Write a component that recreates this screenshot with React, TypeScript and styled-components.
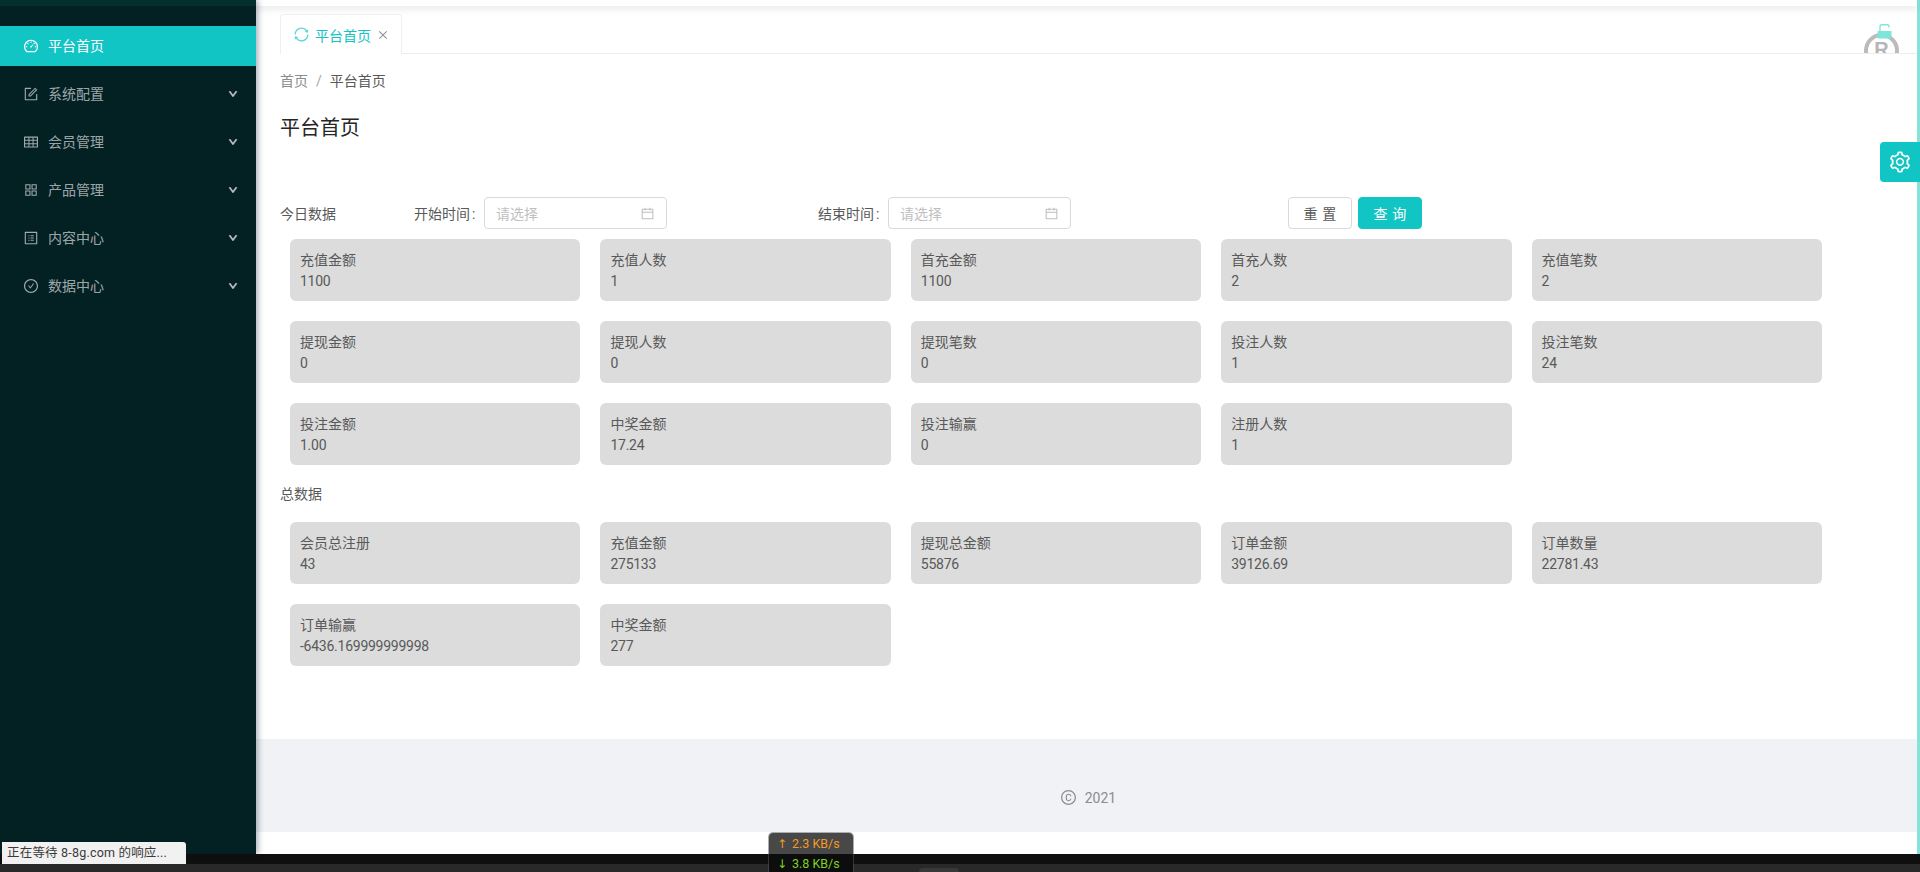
import React from 'react';
import styled, { createGlobalStyle } from 'styled-components';
import {
  AiOutlineDashboard, AiOutlineForm, AiOutlineTable, AiOutlineAppstore, AiOutlineProfile,
  AiOutlineCheckCircle, AiOutlineDown, AiOutlineSetting, AiOutlineCalendar, AiOutlineCopyright,
  AiOutlineClose, AiOutlineSync,
} from 'react-icons/ai';

const Global = createGlobalStyle`
  html, body { margin: 0; padding: 0; height: 100%; overflow: hidden; }
  body { font-family: "Roboto", "Noto Sans CJK SC", sans-serif; font-size: 14px; color: #595959; background: #fff; }
  * { box-sizing: border-box; }
  svg { flex: none; }
`;

const Page = styled.div`
  position: relative; width: 1920px; height: 872px; overflow: hidden;
  display: flex; flex-direction: column;
`;
const Workspace = styled.div`display: flex; height: 854px;`;

const Sidebar = styled.aside`
  width: 256px; flex: none; background: #032023; position: relative; z-index: 3;
  box-shadow: 2px 0 6px rgba(0, 21, 41, 0.35);
  border-top: 6px solid #03302f; padding-top: 20px;
`;
const MenuItem = styled.div<{ $active?: boolean }>`
  height: 40px; margin-bottom: 8px; display: flex; align-items: center; padding: 0 24px;
  background: ${p => (p.$active ? '#12c5c5' : 'transparent')};
  color: ${p => (p.$active ? '#fff' : 'rgba(255,255,255,0.62)')};
  line-height: 40px;
`;
const MenuIcon = styled.span`
  width: 14px; height: 14px; font-size: 16px; display: flex; align-items: center; justify-content: center; margin-right: 10px;
`;
const MenuLabel = styled.span`flex: 1;`;
const Chevron = styled.span`
  display: flex; font-size: 10px; margin-right: -6px; color: rgba(255,255,255,0.55);
  svg { stroke: currentColor; stroke-width: 110px; }
`;

const Content = styled.main`
  flex: 1; min-width: 0; display: flex; flex-direction: column; background: #fff; border-right: 3px solid #86e3d9; position: relative;
`;
const TopBar = styled.div`height: 6px; background: #fff; box-shadow: 0 2px 8px rgba(0, 21, 41, 0.13); position: relative; z-index: 1;`;
const TabBar = styled.div`
  height: 48px; padding: 8px 24px 0; position: relative; overflow: hidden; display: flex;
  &::after { content: ''; position: absolute; left: 24px; right: 0; bottom: 0; height: 1px; background: #ededed; }
`;
const Tab = styled.div`
  width: 122px; height: 40px; border: 1px solid #efefef; border-bottom: 0; border-radius: 4px 4px 0 0; background: #fff;
  display: flex; align-items: center; padding-left: 12px; color: #12c5c5; position: relative; z-index: 1;
`;
const TabSpin = styled.span`display: flex; font-size: 17px; margin-right: 5px; opacity: 0.7;`;
const TabClose = styled.span`display: flex; font-size: 12px; margin-left: 6px; color: #8c8c8c;`;
const Stamp = styled.div`
  position: absolute; left: 1608px; top: 27px; width: 35px; height: 35px; border: 4px solid #bbb; border-radius: 50%;
  color: #b5b5b5; font: 700 20px/24px "Liberation Sans", sans-serif; text-align: center;
`;
const LockIcon = styled.svg`position: absolute; left: 1621px; top: 18px; width: 15px; height: 15px; z-index: 2;`;

const Body = styled.div`flex: 1; padding: 0 24px; min-height: 0;`;
const Crumbs = styled.div`height: 22px; margin-top: 16px; line-height: 22px; display: flex; color: #8c8c8c;`;
const CrumbSep = styled.span`margin: 0 8px; color: #a6a6a6;`;
const CrumbNow = styled.span`color: #595959;`;
const Title = styled.h1`margin: 20px 0 0; font-size: 20px; font-weight: 400; line-height: 32px; color: #262626;`;
const Filter = styled.div`display: flex; align-items: center; height: 32px; margin-top: 53px;`;
const SectionLabel = styled.span`font-size: 14px; line-height: 22px; color: #595959; padding-top: 2px;`;
const FieldLabel = styled.span<{ $ml: number }>`margin-left: ${p => p.$ml}px; width: 62px; margin-right: 8px; color: #595959; white-space: nowrap;`;
const Colon = styled.span`margin-left: 2px;`;
const DateBox = styled.div`
  width: 183px; height: 32px; border: 1px solid #d9d9d9; border-radius: 4px; display: flex; align-items: center;
  padding: 0 11px; color: #bfbfbf; justify-content: space-between;
`;
const Cal = styled.span`display: flex; font-size: 15px; color: #bfbfbf;`;
const Btn = styled.button<{ $primary?: boolean; $ml: number }>`
  width: 64px; height: 32px; margin-left: ${p => p.$ml}px; border-radius: 4px; font: inherit; padding: 0;
  letter-spacing: 0.34em; text-indent: 0.34em;
  border: 1px solid ${p => (p.$primary ? '#12c5c5' : '#d9d9d9')};
  background: ${p => (p.$primary ? '#12c5c5' : '#fff')};
  color: ${p => (p.$primary ? '#fff' : '#595959')};
`;
const CardGrid = styled.div<{ $mt: number }>`
  display: grid; grid-template-columns: repeat(5, 290.4px); column-gap: 20px; row-gap: 20px; margin: ${p => p.$mt}px 0 0 10px;
`;
const Card = styled.div`
  height: 62px; background: #dcdcdc; border-radius: 6px; padding: 11px 10px 9px; line-height: 21px; color: #595959;
`;
const CardValue = styled.div`letter-spacing: -0.25px;`;
const TotalLabel = styled(SectionLabel)`display: block; margin-top: 17px; padding-top: 1px;`;

const Footer = styled.footer`
  height: 93px; flex: none; background: #f0f2f5; color: #8c8c8c; display: flex; align-items: center; justify-content: center; padding: 24px 0 0 3px;
`;
const CopyIcon = styled.span`display: flex; font-size: 17px; margin-right: 8px;`;
const Tail = styled.div`height: 22px; flex: none; background: #fff;`;

const GearBtn = styled.div`
  position: absolute; right: -3px; top: 142px; width: 40px; height: 40px; background: #12c5c5; border-radius: 4px 0 0 4px;
  color: #fff; display: flex; align-items: center; justify-content: center; font-size: 24px; z-index: 4;
`;

const Chrome = styled.div`height: 18px; flex: none; background: #0f0f0f; border-bottom: 8px solid #292929; position: relative;`;
const ChromeTab = styled.div`position: absolute; left: 919px; top: 14px; width: 40px; height: 6px; background: #383838; border-radius: 4px 4px 0 0;`;
const Status = styled.div`
  position: absolute; left: 2px; top: 842px; width: 184px; height: 22px; background: #f1f1f1; color: #3a3a3a;
  font-size: 12.5px; letter-spacing: 0.2px; line-height: 22px; padding-left: 5px; border-top-right-radius: 3px; z-index: 5; white-space: nowrap;
`;
const Speed = styled.div`
  position: absolute; left: 769px; top: 833px; width: 84px; height: 39px; z-index: 5; border-radius: 4px 4px 0 0;
  background: linear-gradient(#484848 0 21px, #0d0d0d 21px 100%); font: 12.5px/20px "Roboto", sans-serif; padding: 1px 0 0 8px;
  box-shadow: 0 0 0 1px rgba(90,90,90,0.5);
`;
const SpeedRow = styled.div<{ $c: string }>`color: ${p => p.$c}; white-space: nowrap;`;
const SpeedArrow = styled.span`display: inline-block; width: 15px; font-family: "DejaVu Sans", sans-serif; font-size: 12px;`;

const menu = [
  { icon: <AiOutlineDashboard />, label: '平台首页', active: true },
  { icon: <AiOutlineForm />, label: '系统配置' },
  { icon: <AiOutlineTable />, label: '会员管理' },
  { icon: <AiOutlineAppstore />, label: '产品管理' },
  { icon: <AiOutlineProfile />, label: '内容中心' },
  { icon: <AiOutlineCheckCircle />, label: '数据中心' },
];
const today: [string, string][] = [
  ['充值金额', '1100'], ['充值人数', '1'], ['首充金额', '1100'], ['首充人数', '2'], ['充值笔数', '2'],
  ['提现金额', '0'], ['提现人数', '0'], ['提现笔数', '0'], ['投注人数', '1'], ['投注笔数', '24'],
  ['投注金额', '1.00'], ['中奖金额', '17.24'], ['投注输赢', '0'], ['注册人数', '1'],
];
const total: [string, string][] = [
  ['会员总注册', '43'], ['充值金额', '275133'], ['提现总金额', '55876'], ['订单金额', '39126.69'], ['订单数量', '22781.43'],
  ['订单输赢', '-6436.169999999998'], ['中奖金额', '277'],
];

const Cards = ({ items, mt }: { items: [string, string][]; mt: number }) => (
  <CardGrid $mt={mt}>
    {items.map(([k, v]) => (
      <Card key={k}>
        <div>{k}</div>
        <CardValue>{v}</CardValue>
      </Card>
    ))}
  </CardGrid>
);

export default function App() {
  return (
    <Page>
      <Global />
      <Workspace>
        <Sidebar>
          {menu.map(m => (
            <MenuItem key={m.label} $active={m.active}>
              <MenuIcon>{m.icon}</MenuIcon>
              <MenuLabel>{m.label}</MenuLabel>
              {!m.active && <Chevron><AiOutlineDown /></Chevron>}
            </MenuItem>
          ))}
        </Sidebar>
        <Content>
          <TopBar />
          <TabBar>
            <Tab>
              <TabSpin><AiOutlineSync /></TabSpin>
              平台首页
              <TabClose><AiOutlineClose /></TabClose>
            </Tab>
            <Stamp>R</Stamp>
            <LockIcon viewBox="0 0 15 15">
              <path d="M3 7V2.5a1.8 1.8 0 0 1 1.8-1.8h5.4a1.8 1.8 0 0 1 1.8 1.8v1" fill="none" stroke="#7fe5da" strokeWidth="1.4" />
              <rect x="0.5" y="7" width="14" height="7.5" fill="#7fe5da" />
            </LockIcon>
          </TabBar>
          <Body>
            <Crumbs>首页<CrumbSep>/</CrumbSep><CrumbNow>平台首页</CrumbNow></Crumbs>
            <Title>平台首页</Title>
            <Filter>
              <SectionLabel>今日数据</SectionLabel>
              <FieldLabel $ml={78}>开始时间<Colon>:</Colon></FieldLabel>
              <DateBox>请选择<Cal><AiOutlineCalendar /></Cal></DateBox>
              <FieldLabel $ml={151}>结束时间<Colon>:</Colon></FieldLabel>
              <DateBox>请选择<Cal><AiOutlineCalendar /></Cal></DateBox>
              <Btn $ml={217}>重置</Btn>
              <Btn $ml={6} $primary>查询</Btn>
            </Filter>
            <Cards items={today} mt={10} />
            <TotalLabel>总数据</TotalLabel>
            <Cards items={total} mt={17} />
          </Body>
          <Footer><CopyIcon><AiOutlineCopyright /></CopyIcon>2021</Footer>
          <Tail />
          <GearBtn><AiOutlineSetting /></GearBtn>
        </Content>
      </Workspace>
      <Chrome><ChromeTab /></Chrome>
      <Status>正在等待 8-8g.com 的响应...</Status>
      <Speed>
        <SpeedRow $c="#f59a23"><SpeedArrow>↑</SpeedArrow>2.3 KB/s</SpeedRow>
        <SpeedRow $c="#7ed321"><SpeedArrow>↓</SpeedArrow>3.8 KB/s</SpeedRow>
      </Speed>
    </Page>
  );
}
